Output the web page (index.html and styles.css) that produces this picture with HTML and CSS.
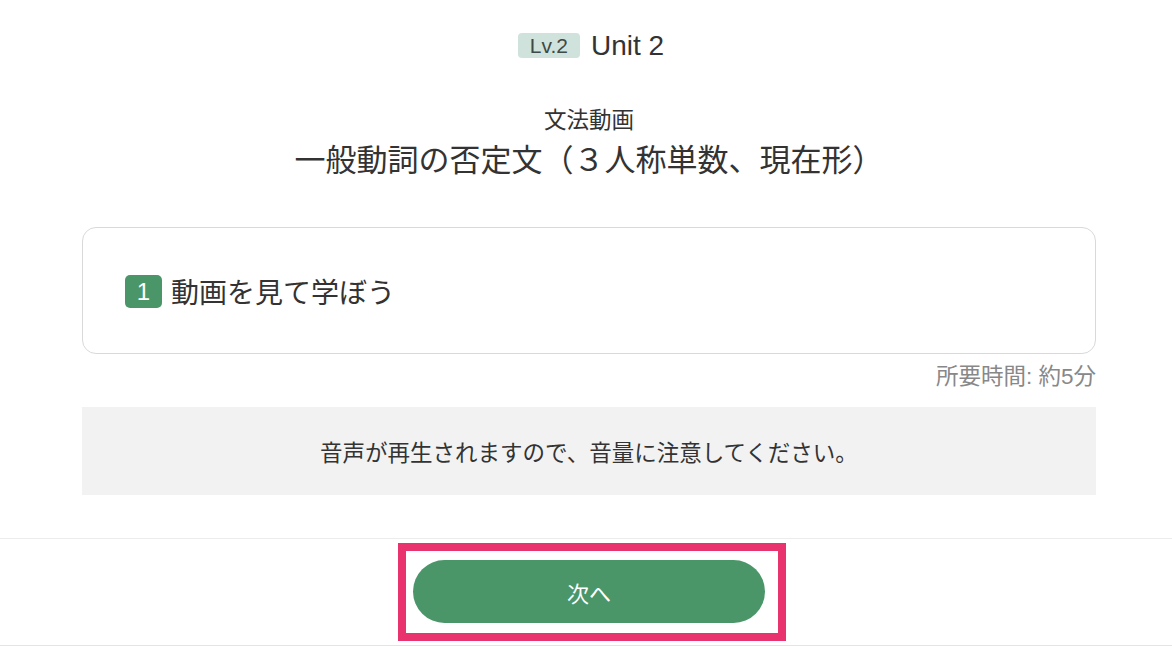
FILE: index.html
```html
<!DOCTYPE html>
<html lang="ja">
<head>
<meta charset="utf-8">
<link rel="stylesheet" href="styles.css">
<title>Unit 2</title>
</head>
<body>
  <div class="main">
    <div class="unit">
      <span class="level">Lv.2</span>
      <span class="unit-name">Unit 2</span>
    </div>
    <div class="kind">文法動画</div>
    <h1 class="title">一般動詞の否定文（３人称単数、現在形）</h1>

    <div class="card">
      <span class="step">1</span>
      <span class="step-text">動画を見て学ぼう</span>
    </div>
    <div class="time">所要時間: 約5分</div>

    <div class="notice">音声が再生されますので、音量に注意してください。</div>
  </div>

  <div class="footer">
    <div class="highlight">
      <button class="next">次へ</button>
    </div>
  </div>
</body>
</html>
```

FILE: styles.css
```css
html, body { margin: 0; padding: 0; background: #fff; }
body { font-family: "Liberation Sans", "Noto Sans CJK JP", sans-serif; color: #333; height: 646px; overflow: hidden; }

.main { padding: 33px 76px 0 82px; height: 505px; }

.unit { display: flex; justify-content: center; align-items: center; gap: 11px; height: 25px; margin-left: 4px; }
.level { background: #d0e2dc; color: #3d4a45; font-size: 21px; line-height: 25px; padding: 0 12px; border-radius: 4px; }
.unit-name { font-size: 28px; line-height: 25px; color: #333; }

.kind { text-align: center; font-size: 22.5px; line-height: 30px; margin-top: 48px; }
.title { text-align: center; font-size: 31px; font-weight: normal; line-height: 50px; margin: 0; color: #333; }

.card { display: flex; align-items: center; gap: 9px; height: 125px; margin-top: 41px; padding-left: 42px; border: 1px solid #d9d9d9; border-radius: 14px; }
.step { display: inline-flex; justify-content: center; align-items: center; width: 37px; height: 33px; background: #4a9669; color: #fff; border-radius: 5px; font-size: 24px; margin-top: 2px; }
.step-text { font-size: 28px; color: #333; }

.time { text-align: right; font-size: 22.5px; line-height: 30px; margin-top: 8px; color: #888; }

.notice { background: #f2f2f2; height: 88px; margin-top: 15px; display: flex; justify-content: center; align-items: center; font-size: 22.5px; color: #333; }

.footer { border-top: 1px solid #ececec; border-bottom: 1px solid #e4e4e4; height: 106px; display: flex; justify-content: center; padding: 0 76px 0 82px; }
.highlight { border: 8px solid #e8336f; padding: 9px 13px 10px 7px; margin-top: 4px; margin-left: 6px; height: 63px; }
.next { width: 352px; height: 63px; border: none; border-radius: 32px; background: #4a9669; color: #fff; font-family: "Noto Sans CJK JP", sans-serif; font-size: 22px; padding: 0; }
```
